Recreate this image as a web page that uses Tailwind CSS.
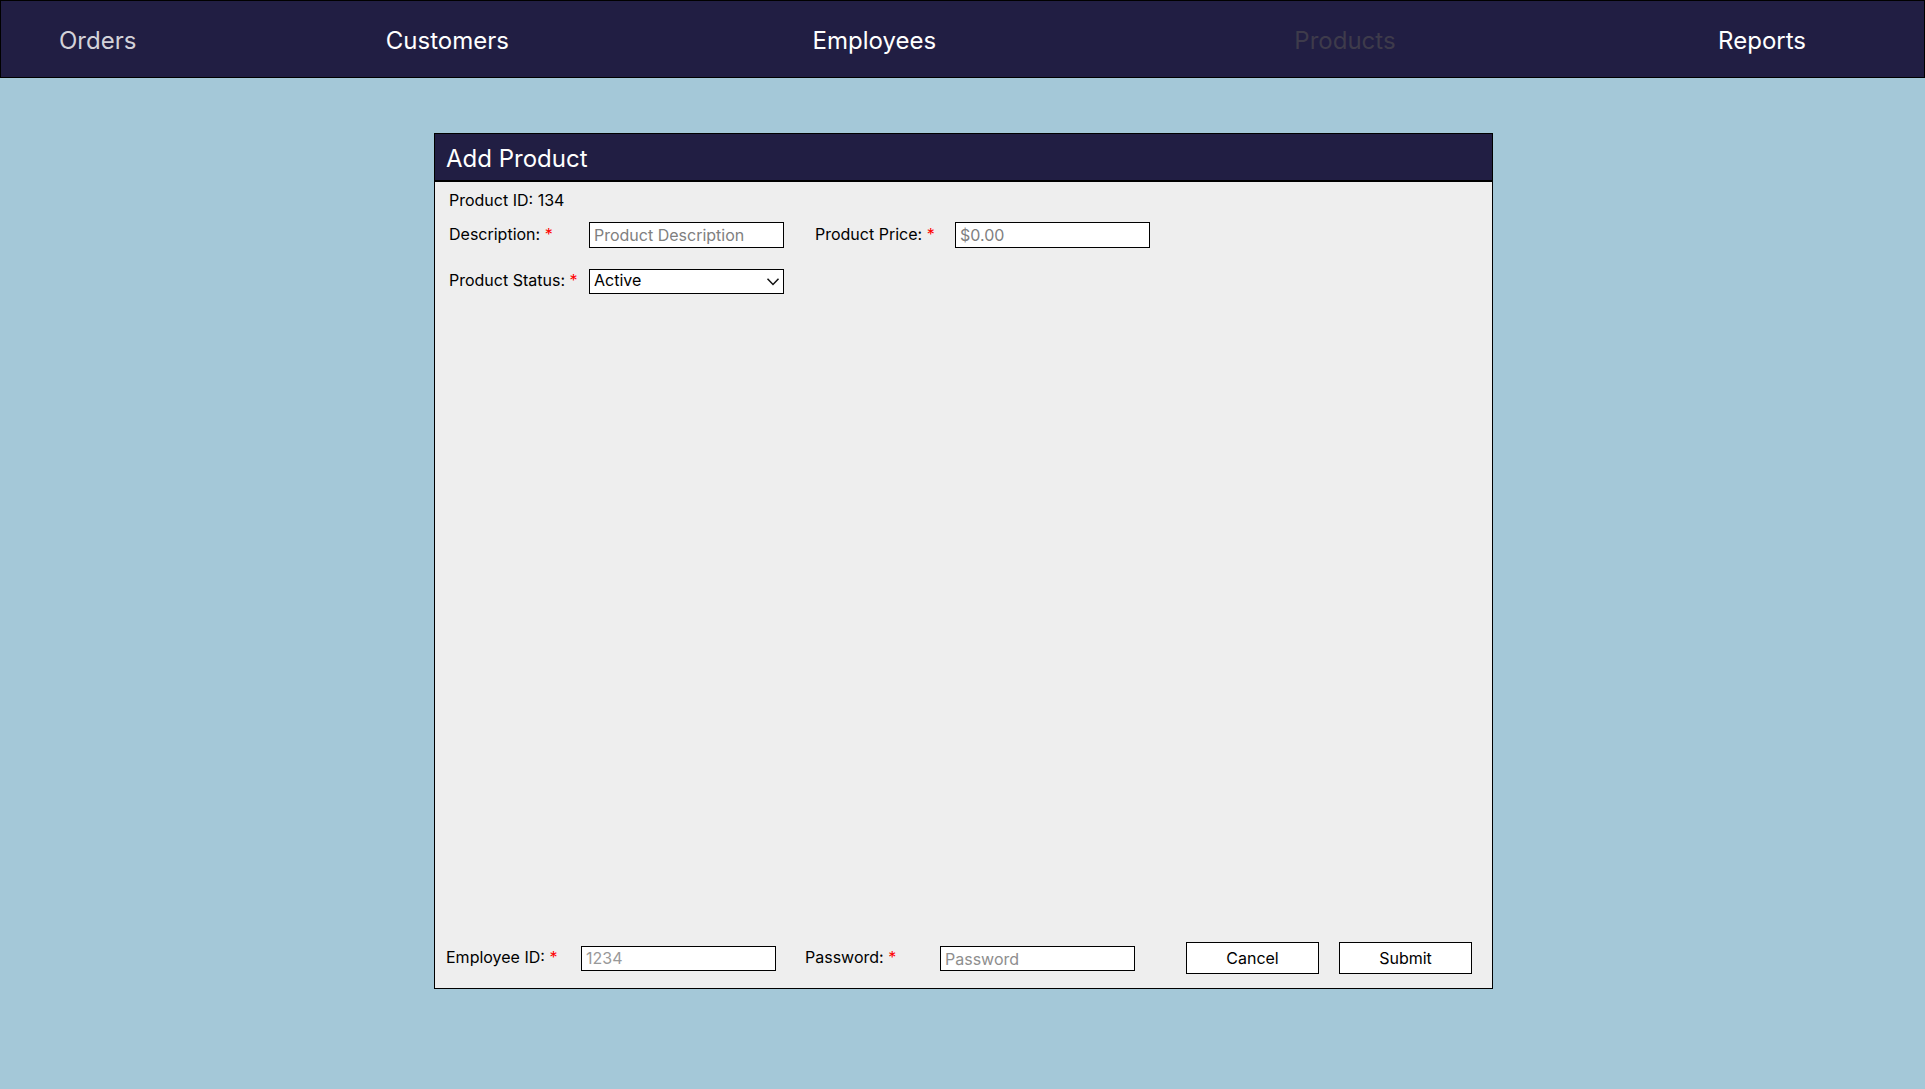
<!DOCTYPE html>
<html lang="en">
<head>
<meta charset="utf-8">
<meta name="viewport" content="width=device-width, initial-scale=1">
<title>Add Product</title>
<script src="https://cdn.jsdelivr.net/npm/@tailwindcss/browser@4"></script>
</head>
<body class="flex min-h-screen flex-col bg-[#a4c8d8] font-[Inter,sans-serif] text-base text-black">
  <nav class="grid h-[78px] grid-cols-[327fr_427fr_482fr_424fr_206fr] items-center border border-black bg-[#211e43] pt-[3px] pl-[58px] text-2xl text-white">
    <a href="#orders" class="text-[#d3d2d9]">Orders</a>
    <a href="#customers">Customers</a>
    <a href="#employees">Employees</a>
    <a href="#products" class="text-[#3e3b4b]" aria-current="page">Products</a>
    <a href="#reports">Reports</a>
  </nav>

  <main class="grid flex-1 grid-cols-[434fr_1059fr_432fr] pt-[55px] pb-[100px]">
    <form class="col-start-2 flex flex-col border border-black bg-[#eeeeee]">
      <h1 class="flex h-12 items-center border-b-2 border-black bg-[#211e43] px-[11px] pt-[3px] text-2xl text-white">Add Product</h1>

      <div class="flex-1 px-[14px] pt-[6px]">
        <p class="leading-6">Product ID: 134</p>
        <div class="mt-[10px] grid grid-cols-[140px_195px_140px_195px] items-center gap-y-5">
          <label for="description" class="pb-0.5">Description: <span class="text-[#ff0000]">*</span></label>
          <input id="description" type="text" placeholder="Product Description" class="h-[26px] border border-black bg-white px-1 placeholder:text-[#808080]">
          <label for="price" class="ml-[31px] pb-0.5 whitespace-nowrap">Product Price: <span class="text-[#ff0000]">*</span></label>
          <input id="price" type="text" placeholder="$0.00" class="ml-[31px] h-[26px] w-[195px] border border-black bg-white px-1 placeholder:text-[#808080]">
          <label for="status" class="pb-0.5">Product Status: <span class="text-[#ff0000]">*</span></label>
          <div class="relative">
            <select id="status" class="block h-[25px] w-full appearance-none border border-black bg-white px-1 pb-1 leading-5">
              <option>Active</option>
              <option>Inactive</option>
            </select>
            <svg class="pointer-events-none absolute top-2 right-1 h-[10px] w-[14px]" viewBox="0 0 14 10" fill="none" stroke="#111" stroke-width="1.5" aria-hidden="true"><path d="M1.500 1.800 7 7.500 12.500 1.800"/></svg>
          </div>
        </div>
      </div>

      <div class="flex items-center pr-[20px] pb-[14px] pl-[11px]">
        <label for="employee" class="w-[135px] pb-0.5">Employee ID: <span class="text-[#ff0000]">*</span></label>
        <input id="employee" type="text" placeholder="1234" class="h-[25px] w-[195px] border border-black bg-white px-1 placeholder:text-[#999999]">
        <label for="password" class="ml-[29px] w-[135px] pb-0.5">Password: <span class="text-[#ff0000]">*</span></label>
        <input id="password" type="password" placeholder="Password" class="h-[25px] w-[195px] border border-black bg-white px-1 pt-px placeholder:text-[#8e8e8e]">
        <div class="ml-auto flex gap-5">
          <button type="button" class="h-8 w-[133px] border border-black bg-white">Cancel</button>
          <button type="submit" class="h-8 w-[133px] border border-black bg-white">Submit</button>
        </div>
      </div>
    </form>
  </main>
</body>
</html>
